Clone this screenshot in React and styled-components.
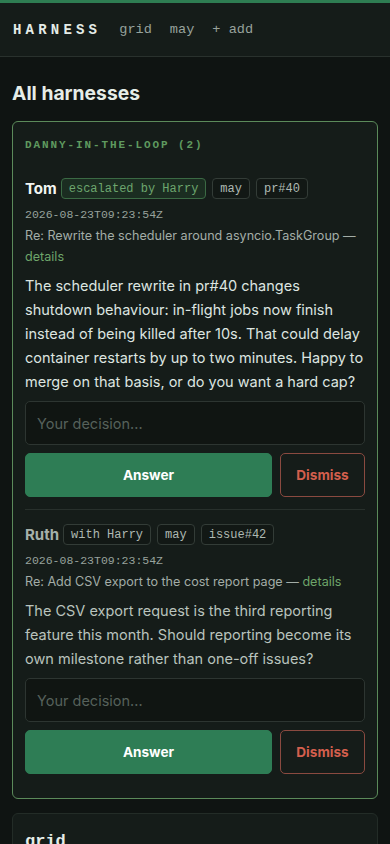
import React, { useState } from 'react'
import styled, { createGlobalStyle } from 'styled-components'

const GlobalStyle = createGlobalStyle`
  html, body {
    margin: 0;
    padding: 0;
    background: #0f1412;
  }
  body {
    font-family: Inter, 'Liberation Sans', sans-serif;
    color: #dce4df;
  }
  * { box-sizing: border-box; }
`

const mono = `'Liberation Mono', 'DejaVu Sans Mono', monospace`
const sans = `Inter, 'Liberation Sans', sans-serif`

const Page = styled.div`
  min-height: 844px;
  background: #0f1412;
  border-top: 3px solid #2e7d52;
`

const Header = styled.header`
  display: flex;
  align-items: center;
  gap: 18px;
  height: 54px;
  padding: 0 13px;
  background: #151c19;
  border-bottom: 1px solid #29312d;
`

const Brand = styled.span`
  font-family: ${mono};
  font-weight: 700;
  font-size: 14px;
  letter-spacing: 4.2px;
  color: #e4ece7;
`

const NavLink = styled.a`
  font-family: ${mono};
  font-size: 13.6px;
  color: #97a29c;
  text-decoration: none;
`

const Main = styled.main`
  padding: 0 12px 20px;
`

const Title = styled.h1`
  margin: 0;
  padding: 24px 0 16px;
  font-size: 19.3px;
  line-height: 24px;
  font-weight: 700;
  color: #e6ede8;
`

const Card = styled.section`
  background: #151c19;
  border: 1px solid ${(p) => (p.$accent ? '#5b8a5a' : '#232c27')};
  border-radius: 6px;
  padding: 12px;
  margin-bottom: 14px;
`

const CardLabel = styled.div`
  font-family: ${mono};
  font-weight: 700;
  font-size: 11px;
  line-height: 14px;
  letter-spacing: 1.9px;
  color: #5f9a5f;
  padding: 4px 0 14px;
`

const CardHeading = styled.div`
  font-family: ${mono};
  font-weight: 700;
  font-size: 17px;
  color: #e4ece7;
  padding: 6px 0;
`

const Item = styled.div`
  padding: 12px 0;
  & + & {
    border-top: 1px solid #28302c;
    padding-top: 14px;
  }
`

const MetaRow = styled.div`
  display: flex;
  align-items: center;
  flex-wrap: wrap;
  gap: 6px;
`

const Name = styled.span`
  font-weight: 700;
  font-size: 15px;
  color: ${(p) => (p.$muted ? '#a6b1ab' : '#f1f5f2')};
  margin-right: -2px;
`

const Badge = styled.span`
  display: inline-flex;
  align-items: center;
  height: 21px;
  padding: 0 7px;
  border-radius: 4px;
  font-family: ${mono};
  font-size: 12px;
  border: 1px solid ${(p) => (p.$green ? '#3b6a44' : '#333c37')};
  background: ${(p) => (p.$green ? '#1b2d21' : '#121815')};
  color: ${(p) => (p.$green ? '#6da66e' : '#aeb8b2')};
`

const Stamp = styled.div`
  font-family: ${mono};
  font-size: 11.5px;
  line-height: 14px;
  color: #97a29c;
  margin-top: 9px;
`

const Ref = styled.div`
  font-size: 12.6px;
  line-height: 21px;
  color: #a3ada7;
  margin-top: 3px;
`

const Details = styled.a`
  color: #6ea56a;
  text-decoration: none;
`

const Body = styled.p`
  margin: 7px 0 0;
  font-size: 14.5px;
  line-height: 24px;
  color: ${(p) => (p.$muted ? '#b9c3bd' : '#dde5e0')};
`

const DecisionInput = styled.input`
  display: block;
  width: 100%;
  height: 44px;
  margin-top: 7px;
  padding: 0 11px;
  background: #101512;
  border: 1px solid #2d3531;
  border-radius: 5px;
  color: #dce4df;
  font-family: ${sans};
  font-size: 14.5px;
  outline: none;
  &::placeholder {
    color: #56615b;
  }
`

const Actions = styled.div`
  display: flex;
  gap: 8px;
  margin-top: 8px;
`

const Button = styled.button`
  height: 44px;
  border-radius: 5px;
  font-family: ${sans};
  font-weight: 700;
  font-size: 13.6px;
  cursor: pointer;
  flex: ${(p) => (p.$primary ? '1' : '0 0 85px')};
  border: 1px solid ${(p) => (p.$primary ? '#2e7d55' : '#8a4a40')};
  background: ${(p) => (p.$primary ? '#2e7d55' : 'transparent')};
  color: ${(p) => (p.$primary ? '#ffffff' : '#d35f4d')};
`

const questions = [
  {
    name: 'Tom',
    badges: [
      { text: 'escalated by Harry', green: true },
      { text: 'may' },
      { text: 'pr#40' },
    ],
    stamp: '2026-08-23T09:23:54Z',
    re: 'Re: Rewrite the scheduler around asyncio.TaskGroup',
    body:
      'The scheduler rewrite in pr#40 changes shutdown behaviour: in-flight jobs now finish instead of being killed after 10s. That could delay container restarts by up to two minutes. Happy to merge on that basis, or do you want a hard cap?',
  },
  {
    name: 'Ruth',
    muted: true,
    badges: [{ text: 'with Harry' }, { text: 'may' }, { text: 'issue#42' }],
    stamp: '2026-08-23T09:23:54Z',
    re: 'Re: Add CSV export to the cost report page',
    body:
      'The CSV export request is the third reporting feature this month. Should reporting become its own milestone rather than one-off issues?',
  },
]

const Question = ({ q }) => {
  const [value, setValue] = useState('')
  return (
    <Item>
      <MetaRow>
        <Name $muted={q.muted}>{q.name}</Name>
        {q.badges.map((b) => (
          <Badge key={b.text} $green={b.green}>
            {b.text}
          </Badge>
        ))}
      </MetaRow>
      <Stamp>{q.stamp}</Stamp>
      <Ref>
        {q.re} — <Details href='#'>details</Details>
      </Ref>
      <Body $muted={q.muted}>{q.body}</Body>
      <DecisionInput
        type='text'
        value={value}
        onChange={(e) => setValue(e.target.value)}
        placeholder='Your decision...'
      />
      <Actions>
        <Button $primary>Answer</Button>
        <Button>Dismiss</Button>
      </Actions>
    </Item>
  )
}

const App = () => (
  <Page>
    <GlobalStyle />
    <Header>
      <Brand>HARNESS</Brand>
      <NavLink href='#'>grid</NavLink>
      <NavLink href='#'>may</NavLink>
      <NavLink href='#'>+ add</NavLink>
    </Header>
    <Main>
      <Title>All harnesses</Title>
      <Card $accent>
        <CardLabel>DANNY-IN-THE-LOOP (2)</CardLabel>
        {questions.map((q) => (
          <Question key={q.name} q={q} />
        ))}
      </Card>
      <Card>
        <CardHeading>grid</CardHeading>
      </Card>
    </Main>
  </Page>
)

export default App
